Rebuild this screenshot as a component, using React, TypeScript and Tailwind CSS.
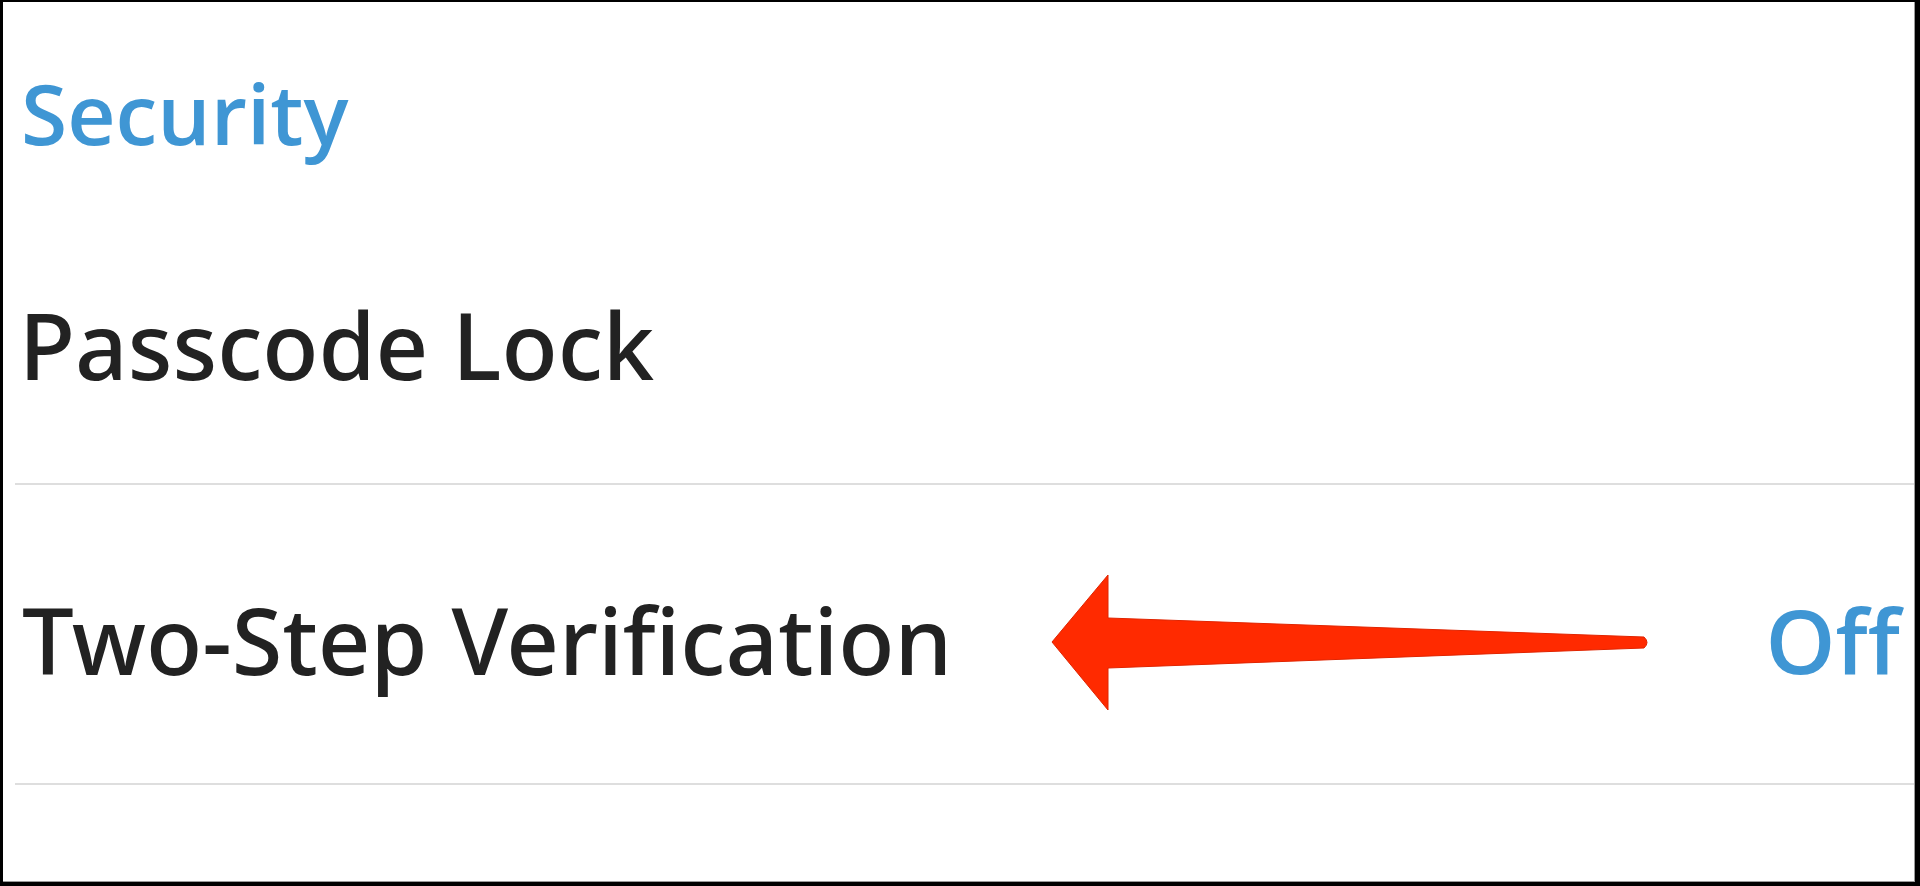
import React from "react";

export default function App() {
  return (
    <div className="w-[1920px] h-[886px] bg-black overflow-hidden">
      <div className="relative ml-[3px] mt-[2px] w-[1912px] h-[880px] bg-white border-r-[1px] border-b-[1px] border-[#9a9a9a] flex flex-col">
        <div className="h-[186px] flex items-center pl-[18px] pt-[36px]">
          <span className="text-[84px] leading-none font-semibold text-[#3f96d4] font-['Open_Sans',sans-serif]">Security</span>
        </div>
        <div className="h-[297px] flex items-center pl-[4px] pt-[18px] border-b-2 border-[#dedede] ml-[12px]">
          <span className="text-[92px] leading-none font-medium text-[#222222] font-['Noto_Sans',sans-serif]">Passcode Lock</span>
        </div>
        <div className="h-[300px] flex items-center justify-between pl-[7px] pr-[14px] pt-[11px] border-b-2 border-[#dedede] ml-[12px]">
          <span className="text-[92px] leading-none font-medium text-[#222222] font-['Noto_Sans',sans-serif]">Two-Step Verification</span>
          <span className="text-[89px] leading-none font-semibold text-[#3f96d4] font-['Open_Sans',sans-serif]">Off</span>
        </div>
        <svg className="absolute left-0 top-0 pointer-events-none" width="1912" height="880" viewBox="0 0 1912 880">
          <g transform="translate(-3,-2)">
            <path
              d="M1052 642 L1108 575 L1108 618 L1644 637 Q1650 642.5 1644 648 L1108 668 L1108 710 Z"
              fill="#ff2a00"
              stroke="#e02400"
              strokeWidth="1"
              strokeLinejoin="round"
            />
          </g>
        </svg>
      </div>
    </div>
  );
}
